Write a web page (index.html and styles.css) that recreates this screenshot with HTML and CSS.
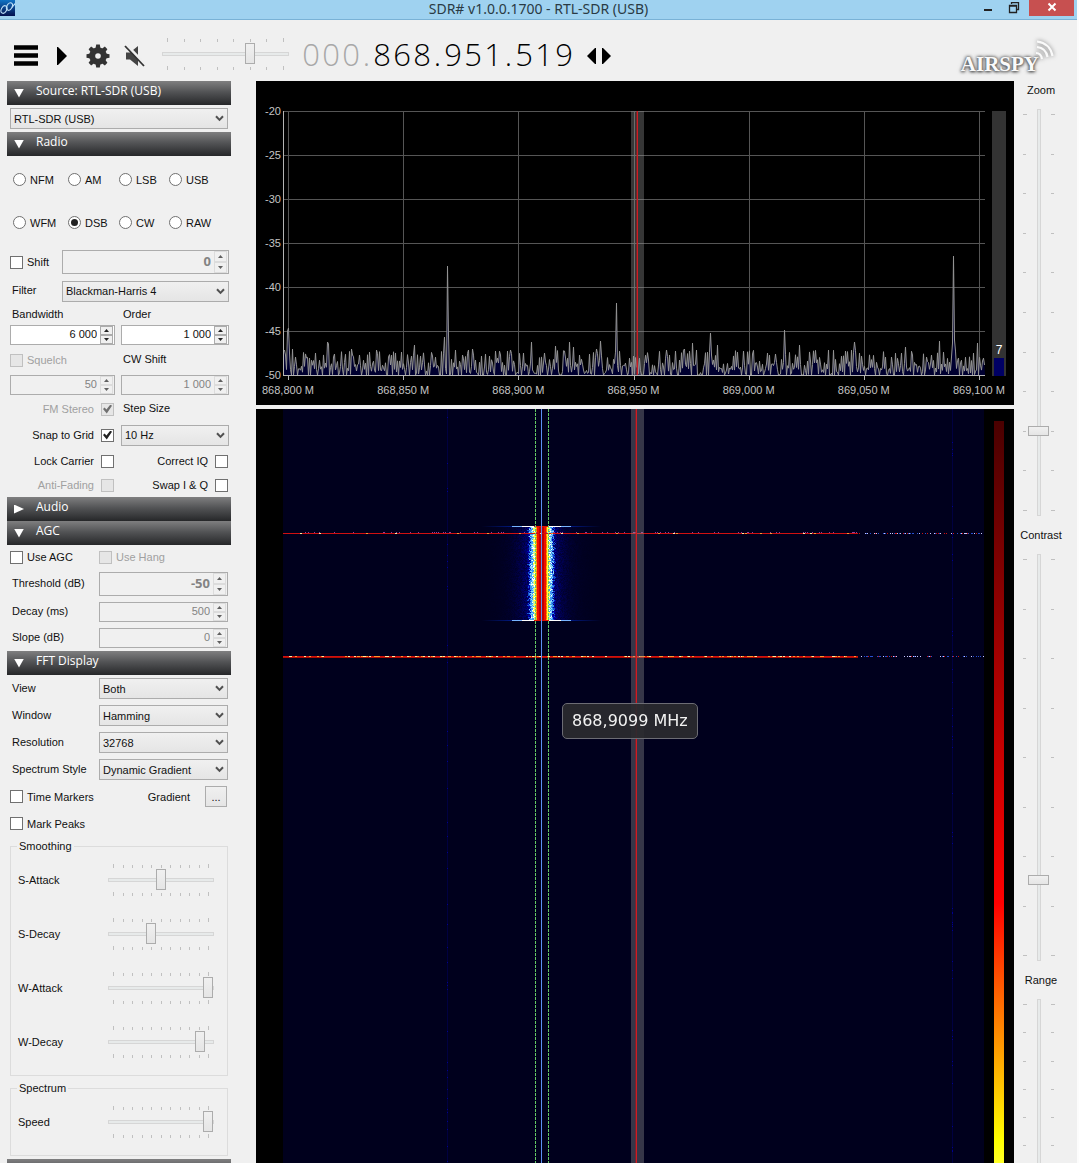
FILE: index.html
```html
<!DOCTYPE html>
<html lang="en">
<head>
<meta charset="utf-8">
<title>SDR# v1.0.0.1700 - RTL-SDR (USB)</title>
<link rel="stylesheet" href="styles.css">
</head>
<body>
<svg class="defs" aria-hidden="true">
  <symbol id="chevron" viewBox="0 0 9 7"><path d="M1 1.2 4.500 4.900 8 1.200" fill="none" stroke="#505050" stroke-width="2"/></symbol>
</svg>
<div class="app">
  <header class="titlebar">
    <svg class="app-icon" viewBox="0 0 15 16"><defs><linearGradient id="ai" x1="0" y1="0" x2="0" y2="1"><stop offset="0" stop-color="#1173c4"/><stop offset="1" stop-color="#04104e"/></linearGradient></defs><rect width="15" height="16" fill="url(#ai)"/><g fill="none" stroke="#bfe0f8" stroke-width="1.100"><ellipse cx="4" cy="9.500" rx="2.600" ry="4" transform="rotate(28 4 9.500)"/><ellipse cx="9.500" cy="6.500" rx="2.600" ry="4" transform="rotate(28 9.500 6.500)"/><path d="M12 7.500 15 3.500"/></g></svg>
    <h1 class="title">SDR# v1.0.0.1700 - RTL-SDR (USB)</h1>
    <div class="window-buttons">
      <button class="win" aria-label="Minimize"><svg width="12" height="12" viewBox="0 0 12 12"><path d="M2 8H10" stroke="#222" stroke-width="2"/></svg></button>
      <button class="win" aria-label="Restore"><svg width="12" height="12" viewBox="0 0 12 12"><path d="M1.500 3.500h7v7h-7zM1 4.200h8M3.500 2V.5h7v7H9" fill="none" stroke="#222" stroke-width="1.300"/></svg></button>
      <button class="win close" aria-label="Close"><svg width="10" height="10" viewBox="0 0 10 10"><path d="M1.500 1.500l7 7M8.500 1.500l-7 7" stroke="#fff" stroke-width="2"/></svg></button>
    </div>
  </header>

  <div class="toolbar">
    <button class="tool menu" aria-label="Menu"><svg width="24" height="22" viewBox="0 0 24 22"><path d="M0 2.500h24M0 10.500h24M0 18.500h24" stroke="#000" stroke-width="4.600"/></svg></button>
    <button class="tool play" aria-label="Play"><svg width="10" height="18" viewBox="0 0 10 18"><path d="M0 0H1L10 9 1 18H0z"/></svg></button>
    <button class="tool" aria-label="Settings"><svg width="24" height="24" viewBox="0 0 24 24"><g fill="#333"><g id="tooth"><path d="M9.500 4.500 10.200.5h3.600l.7 4v15l-.7 4h-3.600l-.7-4z"/></g><use href="#tooth" transform="rotate(45 12 12)"/><use href="#tooth" transform="rotate(90 12 12)"/><use href="#tooth" transform="rotate(135 12 12)"/><circle cx="12" cy="12" r="8.800"/></g><circle cx="12" cy="12" r="2.800" fill="#efefef"/></svg></button>
    <button class="tool" aria-label="Mute"><svg width="22" height="22" viewBox="0 0 22 22"><path d="M2 7.500h4L14 1v20L6 14.500H2z" fill="#444"/><path d="M2.500 0 22 20.500" stroke="#efefef" stroke-width="3"/><path d="M1 1 20 21" stroke="#333" stroke-width="1.800"/></svg></button>
    <div class="slider volume" data-ticks="8"><input type="range" min="0" max="100" value="71" aria-label="Volume"></div>
    <div class="frequency" aria-label="Frequency">
      <span class="dim">0</span><span class="dim">0</span><span class="dim">0</span><span class="dot dim">.</span><span>8</span><span>6</span><span>8</span><span class="dot">.</span><span>9</span><span>5</span><span>1</span><span class="dot">.</span><span>5</span><span>1</span><span>9</span>
    </div>
    <button class="tool" aria-label="Tuning mode"><svg width="24" height="18" viewBox="0 0 24 18"><path d="M9 1v16H8L0 9 8 1zM15 1v16h1l8-8-8-8z"/></svg></button>
    <div class="logo"><span>AIRSPY</span><svg width="22" height="22" viewBox="0 0 22 22"><g fill="none" stroke="#fafafa" stroke-width="2.200"><path d="M3 14q5 0 6 6M4 8q9 1 10.500 10M4 2.500Q17 4 19.500 17"/></g></svg></div>
  </div>

  <main class="main">
    <aside class="panel">
      <h2 class="section"><span class="arrow down"></span>Source: RTL-SDR (USB)</h2>
      <div class="body source">
        <div class="select"><select aria-label="Source"><option>RTL-SDR (USB)</option></select><svg><use href="#chevron"/></svg></div>
      </div>

      <h2 class="section"><span class="arrow down"></span>Radio</h2>
      <div class="body">
        <div class="modes">
          <label><input type="radio" name="mode">NFM</label><label><input type="radio" name="mode">AM</label><label><input type="radio" name="mode">LSB</label><label><input type="radio" name="mode">USB</label>
          <label><input type="radio" name="mode">WFM</label><label><input type="radio" name="mode" checked>DSB</label><label><input type="radio" name="mode">CW</label><label><input type="radio" name="mode">RAW</label>
        </div>
        <div class="row shift">
          <label class="check"><input type="checkbox">Shift</label>
          <div class="spin big off"><input type="text" value="0" disabled aria-label="Shift"><div class="steps"><button disabled aria-label="Up"></button><button disabled aria-label="Down"></button></div></div>
        </div>
        <div class="row shift mid">
          <label class="cap" for="filter">Filter</label>
          <div class="select"><select id="filter"><option>Blackman-Harris 4</option></select><svg><use href="#chevron"/></svg></div>
        </div>
        <div class="row pair tight">
          <label class="cap" for="bw">Bandwidth</label><label class="cap" for="order">Order</label>
        </div>
        <div class="row pair tight">
          <div class="spin"><input id="bw" type="text" value="6 000"><div class="steps"><button aria-label="Up"></button><button aria-label="Down"></button></div></div>
          <div class="spin"><input id="order" type="text" value="1 000"><div class="steps"><button aria-label="Up"></button><button aria-label="Down"></button></div></div>
        </div>
        <div class="row pair">
          <label class="check off"><input type="checkbox" disabled>Squelch</label><label class="cap" for="cw">CW Shift</label>
        </div>
        <div class="row pair tight">
          <div class="spin off"><input type="text" value="50" disabled aria-label="Squelch level"><div class="steps"><button disabled aria-label="Up"></button><button disabled aria-label="Down"></button></div></div>
          <div class="spin off"><input id="cw" type="text" value="1 000" disabled><div class="steps"><button disabled aria-label="Up"></button><button disabled aria-label="Down"></button></div></div>
        </div>
        <div class="row pair mid">
          <label class="check end off">FM Stereo<input type="checkbox" checked disabled></label><label class="cap" for="step">Step Size</label>
        </div>
        <div class="row pair low">
          <label class="check end">Snap to Grid<input type="checkbox" checked></label>
          <div class="select"><select id="step"><option>10 Hz</option></select><svg><use href="#chevron"/></svg></div>
        </div>
        <div class="row pair mid">
          <label class="check end">Lock Carrier<input type="checkbox"></label><label class="check end">Correct IQ<input type="checkbox"></label>
        </div>
        <div class="row pair tight">
          <label class="check end off">Anti-Fading<input type="checkbox" disabled></label><label class="check end">Swap I &amp; Q<input type="checkbox"></label>
        </div>
      </div>

      <h2 class="section"><span class="arrow right"></span>Audio</h2>
      <h2 class="section"><span class="arrow down"></span>AGC</h2>
      <div class="body agc">
        <div class="row low">
          <label class="check"><input type="checkbox">Use AGC</label><label class="check off"><input type="checkbox" disabled>Use Hang</label>
        </div>
        <div class="row field"><label class="cap" for="th">Threshold (dB)</label><div class="spin big off"><input id="th" type="text" value="-50" disabled><div class="steps"><button disabled aria-label="Up"></button><button disabled aria-label="Down"></button></div></div></div>
        <div class="row field"><label class="cap" for="dc">Decay (ms)</label><div class="spin off"><input id="dc" type="text" value="500" disabled><div class="steps"><button disabled aria-label="Up"></button><button disabled aria-label="Down"></button></div></div></div>
        <div class="row field"><label class="cap" for="sl">Slope (dB)</label><div class="spin off"><input id="sl" type="text" value="0" disabled><div class="steps"><button disabled aria-label="Up"></button><button disabled aria-label="Down"></button></div></div></div>
      </div>

      <h2 class="section"><span class="arrow down"></span>FFT Display</h2>
      <div class="body fft">
        <div class="row field"><label class="cap" for="view">View</label><div class="select"><select id="view"><option>Both</option></select><svg><use href="#chevron"/></svg></div></div>
        <div class="row field"><label class="cap" for="win">Window</label><div class="select"><select id="win"><option>Hamming</option></select><svg><use href="#chevron"/></svg></div></div>
        <div class="row field"><label class="cap" for="res">Resolution</label><div class="select"><select id="res"><option>32768</option></select><svg><use href="#chevron"/></svg></div></div>
        <div class="row field"><label class="cap" for="style">Spectrum Style</label><div class="select"><select id="style"><option>Dynamic Gradient</option></select><svg><use href="#chevron"/></svg></div></div>
        <div class="row between"><label class="check"><input type="checkbox">Time Markers</label><span class="gradient">Gradient<button class="more" aria-label="Edit gradient">...</button></span></div>
        <div class="row"><label class="check"><input type="checkbox">Mark Peaks</label></div>
        <fieldset>
          <legend>Smoothing</legend>
          <div class="line"><label for="sa">S-Attack</label><div class="slider" data-ticks="11"><input id="sa" type="range" value="50"></div></div>
          <div class="line"><label for="sd">S-Decay</label><div class="slider" data-ticks="11"><input id="sd" type="range" value="39"></div></div>
          <div class="line"><label for="wa">W-Attack</label><div class="slider" data-ticks="11"><input id="wa" type="range" value="100"></div></div>
          <div class="line"><label for="wd">W-Decay</label><div class="slider" data-ticks="11"><input id="wd" type="range" value="91"></div></div>
        </fieldset>
        <fieldset>
          <legend>Spectrum</legend>
          <div class="line"><label for="sp">Speed</label><div class="slider" data-ticks="11"><input id="sp" type="range" value="100"></div></div>
        </fieldset>
      </div>
      <h2 class="section"></h2>
    </aside>

    <div class="views">
      <section class="spectrum" aria-label="Spectrum">
        <div class="y-axis"><span>-20</span><span>-25</span><span>-30</span><span>-35</span><span>-40</span><span>-45</span><span>-50</span></div>
        <div class="plot"><canvas id="spectrum"></canvas></div>
        <div class="meter"><span>7</span><div class="level"></div></div>
        <div class="x-axis"><span>868,800 M</span><span>868,850 M</span><span>868,900 M</span><span>868,950 M</span><span>869,000 M</span><span>869,050 M</span><span>869,100 M</span></div>
      </section>
      <section class="waterfall" aria-label="Waterfall">
        <div class="plot"><canvas id="waterfall"></canvas><div class="tooltip">868,9099 MHz</div></div>
        <div class="scale"></div>
      </section>
    </div>

    <aside class="side">
      <label for="zoom">Zoom</label>
      <div class="slider vertical" data-ticks="11"><input id="zoom" type="range" value="20"></div>
      <label for="contrast">Contrast</label>
      <div class="slider vertical" data-ticks="9"><input id="contrast" type="range" value="19"></div>
      <label for="range">Range</label>
      <div class="slider vertical" data-ticks="15"><input id="range" type="range" value="20"></div>
    </aside>
  </main>
</div>
<script src="script.js"></script>
</body>
</html>
```
FILE: styles.css
```css
* { box-sizing: border-box; }
body {
  margin: 0;
  height: 100vh;
  overflow: hidden;
  font: 11px/14px "Liberation Sans", Arial, sans-serif;
  color: #111;
  background: #fcfcfc;
}
button, input, select { font: inherit; color: inherit; margin: 0; }
button { border: 0; padding: 0; background: none; }
svg { display: block; }
.defs { display: none; }

.app {
  height: 100%;
  margin-right: 2px;
  display: flex;
  flex-direction: column;
  background: #f0f0f0;
}

/* Title bar */
.titlebar {
  flex: none;
  height: 20px;
  display: grid;
  grid-template-columns: 107px 1fr 107px;
  align-items: start;
  background: #9fd2f0;
  border-bottom: 1px solid #79b2d6;
}
.app-icon { width: 15px; height: 16px; }
.title {
  margin: 0;
  font: 14px/17px "Noto Sans", sans-serif;
  color: #2a3a44;
  text-align: center;
}
.window-buttons { display: flex; justify-content: flex-end; padding-right: 3px; }
.win {
  width: 26px;
  height: 16px;
  display: flex;
  justify-content: center;
  align-items: center;
}
.win.close { width: 45px; background: #c75050; padding-bottom: 3px; margin-left: 2px; }

/* Toolbar */
.toolbar {
  flex: none;
  height: 61px;
  display: flex;
  align-items: center;
  padding: 11px 22px 0 14px;
}
.tool { flex: none; }
.toolbar > .tool + .tool { margin-left: 14px; }
.toolbar > .tool.play { margin: 0 5px 0 19px; }
.volume { width: 127px; margin: 0 12px 4px 16px; }
.frequency {
  display: flex;
  font: 300 31px/34px "Open Sans", sans-serif;
  color: #000;
  margin: 0 13px 4px 0;
}
.frequency span { width: 20px; text-align: center; }
.frequency .dot { width: 11px; }
.frequency .dim { color: #a8a8a8; }
.logo {
  margin-left: auto;
  display: flex;
  align-items: flex-end;
  font: bold 21px/18px "Liberation Serif", serif;
  color: #fafafa;
  text-shadow: 0 0 3px #555, 0 0 4px #777, 0 1px 3px #555;
}
.logo svg { margin: 0 0 12px -6px; filter: drop-shadow(0 0 2px #777); }

/* Sliders */
.slider { flex: none; display: flex; flex-direction: column; }
.ticks {
  height: 5px;
  display: flex;
  justify-content: space-between;
  align-items: center;
  padding: 0 5px;
}
.ticks i { width: 1px; height: 3px; background: #c0c0c0; }
.ticks i:first-child, .ticks i:last-child { height: 4px; }
input[type="range"] {
  appearance: none;
  width: 100%;
  height: 23px;
  background: none;
}
input[type="range"]::-webkit-slider-runnable-track {
  height: 4px;
  background: #e7eaea;
  border: 1px solid #d6d6d6;
}
input[type="range"]::-webkit-slider-thumb {
  appearance: none;
  width: 10px;
  height: 21px;
  margin-top: -10px;
  background: linear-gradient(#f0f0f0, #e5e5e5);
  border: 1px solid #acacac;
}
.vertical { flex-direction: row; height: 407px; }
.vertical .ticks { width: 5px; height: auto; flex-direction: column; padding: 5px 0; }
.vertical .ticks i { width: 3px; height: 1px; }
.vertical .ticks i:first-child, .vertical .ticks i:last-child { width: 4px; }
.vertical input[type="range"] {
  writing-mode: vertical-lr;
  direction: rtl;
  width: 23px;
  height: 100%;
}
.vertical input[type="range"]::-webkit-slider-runnable-track { width: 4px; height: 100%; }
.vertical input[type="range"]::-webkit-slider-thumb { width: 21px; height: 10px; margin: 0 0 0 -10px; }

/* Main area */
.main { flex: 1; min-height: 0; display: flex; overflow: hidden; }
.panel { flex: none; width: 224px; margin: 0 25px 0 7px; }
.section {
  margin: 0;
  height: 24px;
  display: flex;
  align-items: center;
  gap: 12px;
  padding: 0 7px 5px;
  font: 12px/16px "Open Sans", sans-serif;
  color: #fff;
  background: linear-gradient(#7f7f80, #535456 45%, #262729);
}
.arrow { width: 10px; height: 9px; background: #fff; margin-top: 5px; }
.arrow.down { clip-path: polygon(0 0, 100% 0, 50% 100%); }
.arrow.right { clip-path: polygon(0 0, 100% 50%, 0 100%); }
.body { padding: 0 2px 2px 3px; }
.source { padding: 3px; }

.row { height: 30px; display: flex; align-items: center; }
.row.tight { height: 20px; }
.row.low { height: 24px; }
.row.mid { height: 28px; }
.pair { display: grid; grid-template-columns: 105px 108px; column-gap: 6px; }
.shift { display: grid; grid-template-columns: 52px minmax(0, 1fr); }
.field { display: grid; grid-template-columns: 89px minmax(0, 1fr); height: 26px; padding-right: 1px; }
.agc { padding-bottom: 0; }
.agc .check { width: 89px; }
.agc .field:nth-child(2) { height: 30px; }
.fft { padding-bottom: 0; }
.fft .row { height: 27px; }
.between { justify-content: space-between; padding-right: 2px; }
.gradient { display: flex; align-items: center; gap: 15px; }
.cap { padding: 0 2px 2px; }

.modes {
  display: grid;
  grid-template-columns: 55px 51px 50px 1fr;
  grid-auto-rows: 43px;
  padding: 2px 0 3px 3px;
}
.modes label, .check { display: flex; align-items: center; gap: 4px; white-space: nowrap; }
.check.end { justify-content: flex-end; gap: 7px; padding-right: 1px; }
.check.off { color: #a0a0a0; }
input[type="radio"], input[type="checkbox"] {
  appearance: none;
  flex: none;
  width: 13px;
  height: 13px;
  display: grid;
  place-items: center;
  background: #fff;
  border: 1px solid #707070;
}
input[type="radio"] { border-radius: 50%; }
input[type="radio"]:checked::after { content: ""; width: 7px; height: 7px; border-radius: 50%; background: #222; }
input[type="checkbox"]:checked::after {
  content: "";
  width: 9px;
  height: 9px;
  background: #222;
  clip-path: polygon(0 50%, 18% 32%, 38% 56%, 82% 0, 100% 14%, 42% 100%);
}
input[type="checkbox"]:disabled { background: #e6e6e6; border-color: #c0c0c0; }
input[type="checkbox"]:disabled:checked::after { background: #707070; }

.select { display: grid; }
.select > * { grid-area: 1 / 1; }
.select select {
  appearance: none;
  width: 100%;
  height: 21px;
  padding: 0 3px;
  border: 1px solid #acacac;
  border-radius: 0;
  background: linear-gradient(#f0f0f0, #e5e5e5);
}
.select svg { width: 9px; height: 7px; place-self: center end; margin-right: 4px; pointer-events: none; }

.spin { display: flex; height: 20px; border: 1px solid #acacac; background: #fff; padding-right: 1px; }
.spin input {
  flex: 1;
  min-width: 0;
  width: 0;
  border: 0;
  padding: 0 3px 2px;
  background: none;
  text-align: right;
}
.spin.off { background: #f0f0f0; color: #838383; }
.spin.big { height: 24px; }
.spin.big input { font: bold 13px/16px "Open Sans", sans-serif; padding-bottom: 3px; }
.steps { flex: none; width: 13px; display: flex; flex-direction: column; }
.steps button {
  flex: 1;
  display: grid;
  place-items: center;
  background: #f0f0f0;
  border: 1px solid #acacac;
}
.steps button::after { content: ""; width: 5px; height: 3px; background: #222; clip-path: polygon(50% 0, 100% 100%, 0 100%); }
.steps button:last-child::after { clip-path: polygon(0 0, 100% 0, 50% 100%); }
.off .steps button { border-color: #dcdcdc; }
.off .steps button::after { background: #606060; }

.more { width: 22px; height: 21px; border: 1px solid #acacac; background: linear-gradient(#f0f0f0, #e5e5e5); }

fieldset {
  margin: 2px 1px 5px 0;
  padding: 0 13px 6px 7px;
  border: 1px solid #dcdcdc;
}
fieldset:last-child { margin-bottom: 3px; }
legend { padding: 0 2px; line-height: 14px; margin-left: -1px; }
.line { height: 54px; display: flex; align-items: center; justify-content: space-between; }
.line .slider { width: 106px; }

/* Spectrum and waterfall */
.views { flex: 1; min-width: 0; display: flex; flex-direction: column; gap: 4px; }
.spectrum {
  flex: none;
  display: grid;
  grid-template: 30px 265px 29px / 27px 1fr 29px;
  background: #000;
  color: #c4c4c4;
}
.y-axis { grid-area: 2 / 1; margin-top: -7px; text-align: right; padding-right: 2px; }
.y-axis span { display: block; height: 44px; }
.spectrum .plot { grid-area: 2 / 2; }
.plot { min-width: 0; position: relative; }
.plot canvas { display: block; width: 100%; }
#spectrum { height: 270px; }
.x-axis { grid-area: 3 / 1 / 4 / 4; display: flex; justify-content: space-between; padding: 7px 9px 0 6px; }
.meter {
  grid-area: 2 / 3;
  width: 14px;
  margin-left: 7px;
  display: flex;
  flex-direction: column;
  justify-content: flex-end;
  align-items: center;
  background: #333;
  color: #fff;
  font-size: 12px;
  line-height: 16px;
}
.level { width: 10px; height: 18px; background: #000064; }
.waterfall {
  flex: 1;
  min-height: 0;
  display: grid;
  grid-template-columns: 27px 1fr 10px 10px 10px;
  background: #000;
}
.waterfall .plot { grid-column: 2; overflow: hidden; }
#waterfall { height: 100%; }
.scale { grid-column: 4; margin-top: 12px; background: linear-gradient(#4a0000, #f00 65%, #ff0 97%, #ffff28); }
.tooltip {
  position: absolute;
  left: 279px;
  top: 294px;
  padding: 7px 9px;
  border: 1px solid #6c6c74;
  border-radius: 5px;
  background: rgba(42, 42, 46, .93);
  color: #f2f2f2;
  font: 16px/20px "DejaVu Sans", sans-serif;
  white-space: nowrap;
}

.side {
  flex: none;
  width: 63px;
  display: flex;
  flex-direction: column;
  align-items: center;
  padding-right: 14px;
}
.side label { flex: none; height: 38px; padding: 12px 0 0 5px; }
.side label:first-child { height: 28px; padding-top: 2px; }
```
FILE: script.js
```js
// Tick rows on both sides of every slider.
document.querySelectorAll('.slider').forEach(function (slider) {
  var row = document.createElement('div');
  row.className = 'ticks';
  for (var i = 0; i < Number(slider.dataset.ticks); i++) row.appendChild(document.createElement('i'));
  slider.prepend(row);
  slider.append(row.cloneNode(true));
});

// Peaks as [position on a 700-unit span, height above the noise floor].
var PEAKS = [[0,25],[1,20],[3,44],[4,47],[5,22],[8,26],[11,18],[22,17],[25,17],[31,22],[43,33],[44,31],[50,21],[67,26],[68,20],[75,20],[85,23],[92,25],[104,18],[117,23],[130,30],[136,19],[148,19],[160,38],[163,109],[164,40],[171,25],[178,20],[184,25],[188,26],[197,19],[205,19],[216,20],[223,24],[226,25],[239,22],[247,33],[260,22],[271,29],[280,24],[285,33],[289,28],[295,20],[305,21],[312,26],[316,34],[332,72],[353,20],[364,15],[382,25],[391,24],[400,26],[408,32],[412,25],[426,42],[427,20],[433,30],[453,23],[459,24],[468,21],[483,22],[491,21],[500,45],[515,30],[526,14],[544,25],[561,24],[570,33],[577,19],[601,18],[607,18],[617,22],[621,28],[628,20],[642,18],[647,20],[655,34],[668,32],[669,119],[670,35],[674,17],[689,22],[693,32],[698,14]];

function random(seed) {
  return function () {
    seed = (seed * 1664525 + 1013904223) % 4294967296;
    return seed / 4294967296;
  };
}

function prepare(id) {
  var c = document.getElementById(id);
  c.width = c.clientWidth;
  c.height = c.clientHeight;
  return c;
}

function drawTuner(g, x, h) {
  g.fillStyle = 'rgba(150,150,150,.36)';
  g.fillRect(x(348), 0, 13, h);
  g.fillStyle = '#d01c22';
  g.fillRect(x(354), 0, 1, h);
  g.fillStyle = 'rgba(170,20,30,.5)';
  g.fillRect(x(354) - 1, 0, 1, h);
}

function drawSpectrum() {
  var c = prepare('spectrum'), g = c.getContext('2d'), w = c.width, floor = 264;
  var x = function (u) { return Math.round(u * (w - 1) / 701); };
  g.fillStyle = '#555';
  for (var i = 0; i < 6; i++) g.fillRect(0, i * 44, w, 1);
  for (i = 0; i < 7; i++) g.fillRect(x(5 + i * 115.2), 0, 1, floor);

  var r = random(77), level = [];
  for (i = 0; i <= 700; i++) level[i] = Math.max(0, (r() - 0.2) * (i % 2 ? 31 : 16));
  PEAKS.forEach(function (p) { level[p[0]] = p[1]; });
  g.beginPath();
  g.moveTo(0, floor);
  level.forEach(function (v, u) { g.lineTo(x(u + 1) + 0.5, floor - v); });
  g.lineTo(w, floor);
  g.fillStyle = '#000030';
  g.fill();
  g.beginPath();
  level.forEach(function (v, u) { g.lineTo(x(u + 1) + 0.5, floor - v); });
  g.strokeStyle = '#949494';
  g.lineWidth = 1;
  g.stroke();

  g.fillStyle = '#b4b4b4';
  g.fillRect(0, 0, 1, floor + 1);
  g.fillRect(0, floor, w, 1);
  for (i = 0; i < 7; i++) g.fillRect(x(5 + i * 115.2), floor, 1, 5);
  drawTuner(g, x, floor);
}

function drawWaterfall() {
  var c = prepare('waterfall'), g = c.getContext('2d'), w = c.width, h = c.height;
  var r = random(5), i, y, d;
  var x = function (u) { return Math.round(u * w / 702); };
  function dot(px, py, color) { g.fillStyle = color; g.fillRect(px, py, 1, 1); }
  g.fillStyle = '#00001d';
  g.fillRect(0, 0, w, h);

  // Faint carriers
  [164, 670].forEach(function (u) {
    g.fillStyle = '#000040';
    g.fillRect(x(u), 0, 1, h);
    for (y = 0; y < h; y++) if (r() < 0.06) dot(x(u), y, '#000090');
  });

  // Strong burst
  var mid = x(258), top = 118, bottom = 211;
  for (y = top; y < bottom; y++) {
    for (i = -90; i <= 90; i++) {
      d = Math.abs(i) + (r() - 0.5) * 3;
      var a = Math.abs(i), color = null;
      if (a < 5) color = a < 3 ? '#c00000' : '#f01000';
      else if (a < 6) color = r() < 0.6 ? '#ff7800' : '#ffb400';
      else if (d < 7.5) color = '#ffff40';
      else if (d < 9) color = r() < 0.6 ? '#a0e8e8' : '#fff';
      else if (d < 11.5) color = r() < 0.75 ? '#3c96f0' : '#90d8ff';
      else if (d < 13) color = r() < 0.5 ? '#1450d0' : '#0000b0';
      else color = 'rgba(0,0,150,' + (0.75 * Math.exp(-(a - 12) / 10) * (0.5 + r())) + ')';
      if (color) dot(mid + i, y, color);
    }
  }
  [top - 1, bottom].forEach(function (line) {
    for (i = -60; i <= 60; i++) {
      d = Math.abs(i);
      dot(mid + i, line, d < 8 ? '#e01000' : d < 20 ? '#fff' : d < 30 ? '#78b4ff' : 'rgba(0,40,190,' + (60 - d) / 50 + ')');
    }
  });

  // Wideband pulses: a solid red row with brighter runs along it
  [[124, 0.04], [247, 0.3]].forEach(function (p, n) {
    for (i = 0; i < w; i++) {
      var u = i / w, fade = u > 0.82;
      if (!fade || r() < 1.5 - u * 1.2) {
        dot(i, p[0], fade && r() < 0.7 ? (r() < 0.5 ? '#c8c8ff' : '#2850d0') : '#d01010');
        if (n === 1 && !fade) dot(i, p[0] + 1, '#b00c00');
      }
    }
    for (i = 0; i < w * 0.82; i++) {
      if (r() < p[1]) {
        g.fillStyle = r() < 0.5 ? '#ff9630' : '#ffe8a0';
        g.fillRect(i, p[0], 2, 1);
      }
      if (n === 0 && r() < 0.12) dot(i, p[0] - 1, '#8c40a0');
    }
  });

  // Cursor and filter edges
  g.fillStyle = '#5a90f4';
  g.fillRect(mid, 0, 1, h);
  g.fillStyle = '#64c864';
  for (y = 0; y < h; y += 4) {
    g.fillRect(x(252), y, 1, 3);
    g.fillRect(x(265), y, 1, 3);
  }
  drawTuner(g, x, h);
}

function draw() { drawSpectrum(); drawWaterfall(); }
draw();
window.addEventListener('resize', draw);
```
